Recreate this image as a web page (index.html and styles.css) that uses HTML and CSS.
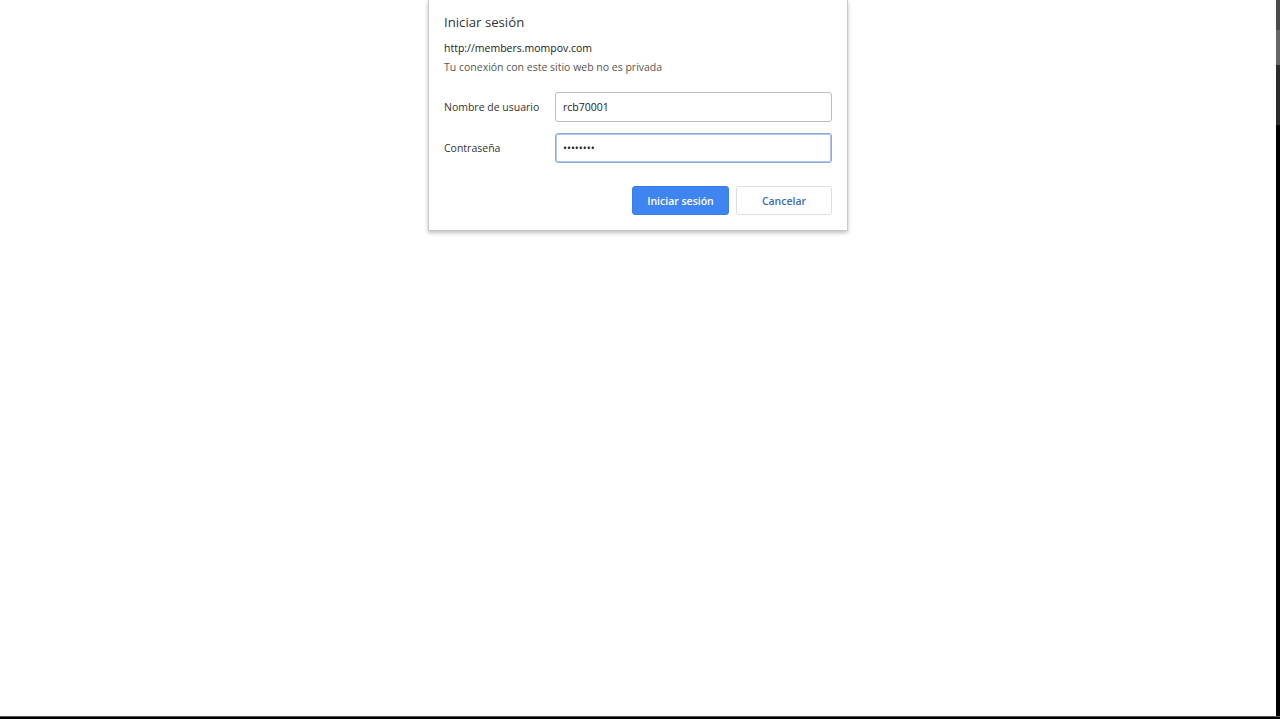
FILE: index.html
```html
<!DOCTYPE html>
<html lang="es">
<head>
    <meta charset="UTF-8">
    <title>Iniciar sesión</title>
    <link rel="stylesheet" href="styles.css">
</head>
<body>
    <div class="screen">
        <div class="page">
            <div class="dialog">
                <div class="dialog-title">Iniciar sesión</div>
                <div class="site">http://members.mompov.com</div>
                <div class="warning">Tu conexión con este sitio web no es privada</div>

                <div class="field">
                    <label for="user">Nombre de usuario</label>
                    <input type="text" id="user" value="rcb70001">
                </div>
                <div class="field">
                    <label for="pass">Contraseña</label>
                    <input type="password" id="pass" class="focused" value="12345678">
                </div>

                <div class="actions">
                    <button class="btn btn-primary">Iniciar sesión</button>
                    <button class="btn btn-cancel">Cancelar</button>
                </div>
            </div>
        </div>
        <div class="scrollbar">
            <div class="thumb-top"></div>
            <div class="thumb"></div>
            <div class="thumb-dark"></div>
        </div>
    </div>
    <div class="bottom-edge"></div>
</body>
</html>
```

FILE: styles.css
```css
html, body {
    margin: 0;
    padding: 0;
    height: 100%;
    overflow: hidden;
    background-color: #000;
    font-family: "Open Sans", "Noto Sans", sans-serif;
}
.screen {
    display: flex;
    height: 716px;
}
.page {
    flex: 1;
    background-color: #fff;
}
.scrollbar {
    width: 4px;
    display: flex;
    flex-direction: column;
    background-color: #000;
}
.thumb-top {
    height: 30px;
    background-color: #4a4a4a;
}
.thumb {
    height: 35px;
    background-color: #666;
}
.thumb-dark {
    height: 60px;
    background-color: #2b2b2b;
}
.bottom-edge {
    height: 3px;
    border-top: 1px solid #555;
    background-color: #000;
}
.dialog {
    width: 388px;
    margin: 0 auto;
    padding: 11px 15px 15px;
    background-color: #fff;
    border: 1px solid #c8c8c8;
    border-top: none;
    box-shadow: 0 2px 4px rgba(0, 0, 0, 0.25);
}
.dialog-title {
    font-size: 13.2px;
    color: #333;
    height: 22px;
    line-height: 22px;
    margin-bottom: 6px;
}
.site {
    font-size: 10.5px;
    color: #222;
    line-height: 19px;
}
.warning {
    font-size: 10.5px;
    color: #555;
    line-height: 19px;
    margin-bottom: 15px;
}
.field {
    display: flex;
    align-items: center;
    margin-bottom: 11px;
}
.field label {
    width: 111px;
    font-size: 10.5px;
    color: #333;
}
.field input {
    flex: 1;
    height: 30px;
    box-sizing: border-box;
    padding: 0 7px;
    font-family: "Open Sans", "Noto Sans", sans-serif;
    font-size: 10.5px;
    color: #222;
    border: 1px solid #bdbdbd;
    border-radius: 3px;
    outline: none;
}
.field input.focused {
    border-color: #8aa9d6;
    box-shadow: inset 0 0 0 1px #b5c9e8;
}
.actions {
    display: flex;
    justify-content: flex-end;
    gap: 7px;
    margin-top: 23px;
}
.btn {
    height: 29px;
    width: 97px;
    font-family: "Open Sans", "Noto Sans", sans-serif;
    font-size: 10.5px;
    font-weight: 600;
    border-radius: 3px;
    cursor: pointer;
}
.btn-primary {
    background-color: #3f85f1;
    color: #fff;
    border: 1px solid #3a7ee8;
}
.btn-cancel {
    width: 96px;
    background-color: #fff;
    color: #3b6cb5;
    border: 1px solid #dedede;
}
```
